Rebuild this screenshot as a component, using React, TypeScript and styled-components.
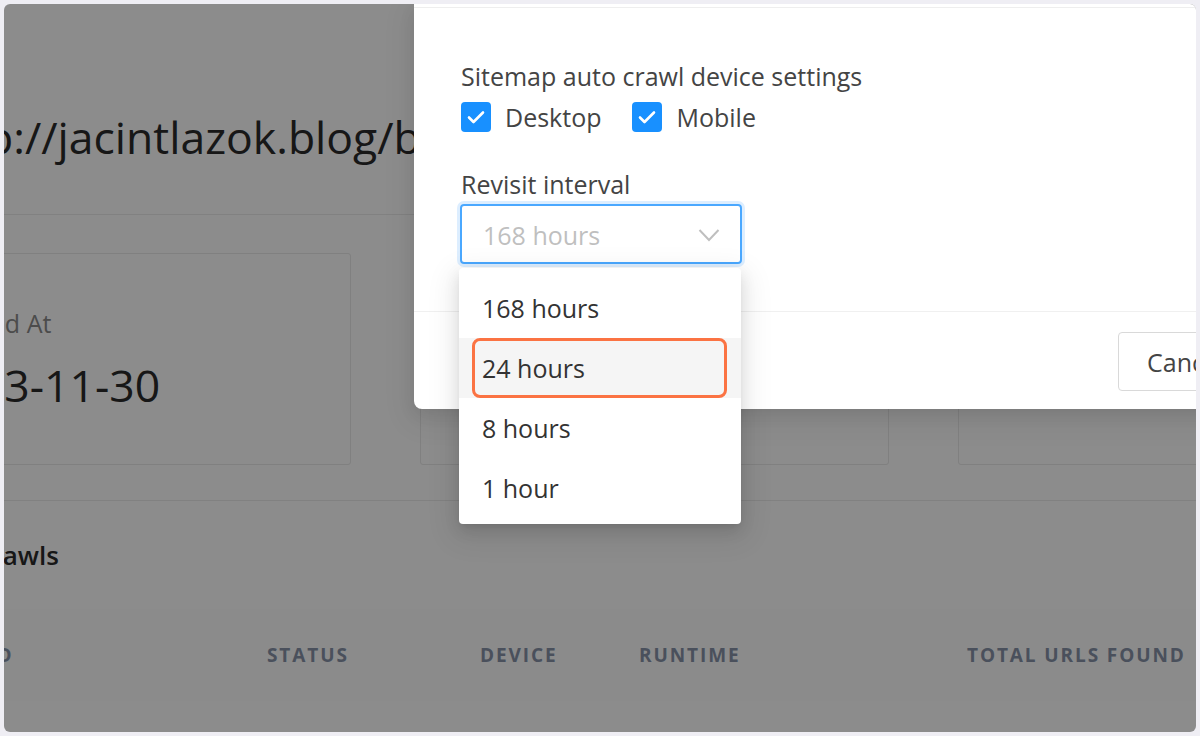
import React from 'react';
import styled, { createGlobalStyle } from 'styled-components';

const GlobalStyle = createGlobalStyle`
  html, body {
    margin: 0;
    padding: 0;
    background: #efeef4;
  }
  body {
    font-family: "Open Sans", "Noto Sans", sans-serif;
  }
  * {
    box-sizing: border-box;
  }
`;

const Frame = styled.div`
  width: 1200px;
  height: 736px;
  padding: 4px;
  background: #efeef4;
  display: flex;
`;

const Screen = styled.div`
  position: relative;
  flex: 1;
  overflow: hidden;
  background: #fff;
  border-radius: 6px;
`;

/* ---------- page behind the modal ---------- */

const Page = styled.div`
  margin-left: -122px;
  width: 1600px;
  display: flex;
  flex-direction: column;
  color: #333;
`;

const TitleBar = styled.div`
  height: 211px;
  padding: 103px 0 0 45px;
  border-bottom: 1px solid #ececec;
`;

const Url = styled.h1`
  margin: 0;
  font-size: 44.5px;
  font-weight: 400;
  line-height: 60px;
  color: #2b2b2b;
`;

const Stats = styled.div`
  display: grid;
  grid-template-columns: repeat(3, 469px);
  column-gap: 69px;
  padding: 38px 0 35px;
  border-bottom: 1px solid #ececec;
`;

const Card = styled.div`
  height: 212px;
  border: 1px solid #e9e9e9;
  border-radius: 3px;
  padding: 52px 0 0 45px;
`;

const CardLabel = styled.div`
  font-size: 25px;
  line-height: 34px;
  color: #8a8a8a;
`;

const CardValue = styled.div`
  margin-top: 15px;
  font-size: 44.5px;
  line-height: 60px;
  color: #2b2b2b;
`;

const Section = styled.div`
  padding: 36px 0 0;
`;

const SectionTitle = styled.h2`
  margin: 0;
  font-size: 26px;
  font-weight: 600;
  line-height: 36px;
  color: #2b2b2b;
`;

const TableHead = styled.div`
  margin-top: 36px;
  height: 92px;
  display: grid;
  grid-template-columns: 385px 213px 159px 328px 1fr;
  align-items: center;
  background: #fdfdfd;
`;

const HeadCell = styled.div`
  font-size: 19px;
  font-weight: 700;
  letter-spacing: 1.9px;
  text-transform: uppercase;
  color: #8793a8;
  padding-left: 24px;
  &:not(:first-child) {
    padding-left: 0;
  }
`;

const Mask = styled.div`
  position: absolute;
  inset: 0;
  background: rgba(0, 0, 0, 0.45);
`;

/* ---------- modal ---------- */

const Modal = styled.div`
  position: absolute;
  top: 0;
  left: 410px;
  width: 900px;
  height: 405px;
  background: #fff;
  border-radius: 0 0 8px 8px;
  display: flex;
  flex-direction: column;
  box-shadow: 0 6px 16px rgba(0, 0, 0, 0.08), 0 9px 28px 8px rgba(0, 0, 0, 0.05);
`;

const ModalTop = styled.div`
  height: 4px;
  border-bottom: 1px solid #eeeeee;
`;

const ModalBody = styled.div`
  height: 303px;
  padding: 50px 0 0 47px;
  display: flex;
  flex-direction: column;
  color: #3d3d3d;
`;

const FieldLabel = styled.div<{ $gap?: number }>`
  font-size: 25px;
  line-height: 36px;
  margin-top: ${p => p.$gap ?? 0}px;
  color: #444;
`;

const CheckRow = styled.div`
  display: flex;
  align-items: center;
  height: 36px;
  margin-top: 5px;
`;

const CheckItem = styled.label`
  display: flex;
  align-items: center;
  gap: 14px;
  margin-right: 31px;
  font-size: 25px;
  color: #444;
`;

const CheckBox = styled.span`
  width: 30px;
  height: 30px;
  border-radius: 4px;
  background: #1890ff;
  display: flex;
  align-items: center;
  justify-content: center;
`;

const SelectBox = styled.div`
  margin-top: 2px;
  width: 282px;
  height: 60px;
  margin-left: -1px;
  border: 2px solid #4aa8ff;
  border-radius: 4px;
  box-shadow: 0 0 0 3px rgba(24, 144, 255, 0.15);
  display: flex;
  align-items: center;
  justify-content: space-between;
  padding: 2px 20px 0 21px;
`;

const Placeholder = styled.span`
  font-size: 25px;
  color: #bfbfbf;
`;

const ModalFooter = styled.div`
  flex: 1;
  border-top: 1px solid #f0f0f0;
  display: flex;
  align-items: flex-start;
  padding: 20px 0 0 704px;
  gap: 16px;
`;

const Button = styled.button<{ $primary?: boolean }>`
  height: 59px;
  padding: 0 28px;
  font-family: inherit;
  font-size: 25px;
  border-radius: 4px;
  border: 1px solid ${p => (p.$primary ? '#1890ff' : '#d9d9d9')};
  background: ${p => (p.$primary ? '#1890ff' : '#fff')};
  color: ${p => (p.$primary ? '#fff' : '#444')};
`;

/* ---------- dropdown ---------- */

const Dropdown = styled.div`
  position: absolute;
  top: 264px;
  left: 455px;
  width: 282px;
  padding: 10px 0 6px;
  background: #fff;
  border-radius: 4px;
  box-shadow: 0 6px 16px rgba(0, 0, 0, 0.1), 0 3px 6px -4px rgba(0, 0, 0, 0.14),
    0 9px 28px 8px rgba(0, 0, 0, 0.07);
`;

const Option = styled.div<{ $active?: boolean }>`
  position: relative;
  height: 60px;
  display: flex;
  align-items: center;
  padding-left: 23px;
  font-size: 25px;
  color: #333;
  background: ${p => (p.$active ? '#f5f5f5' : 'transparent')};
`;

const Highlight = styled.span`
  position: absolute;
  top: 0;
  bottom: 0;
  left: 13px;
  right: 14px;
  border: 3px solid #fb7343;
  border-radius: 8px;
`;

const Check = () => (
  <svg width="18" height="14" viewBox="0 0 18 14">
    <path d="M2 7.5l4.5 4.5L16 2.5" fill="none" stroke="#fff" strokeWidth="2.6" strokeLinecap="round" strokeLinejoin="round" />
  </svg>
);

const Chevron = () => (
  <svg width="22" height="14" viewBox="0 0 22 14">
    <path d="M1.5 2l9.5 10 9.5-10" fill="none" stroke="#bfbfbf" strokeWidth="2" />
  </svg>
);

const options = ['168 hours', '24 hours', '8 hours', '1 hour'];
const headers = ['Crawl ID', 'Status', 'Device', 'Runtime', 'Total URLs Found'];

const App: React.FC = () => {
  return (
    <>
      <GlobalStyle />
      <Frame>
        <Screen>
          <Page>
            <TitleBar>
              <Url>http://jacintlazok.blog/blog</Url>
            </TitleBar>
            <Stats>
              <Card>
                <CardLabel>Created At</CardLabel>
                <CardValue>2023-11-30</CardValue>
              </Card>
              <Card>
                <CardLabel>Last Crawl</CardLabel>
                <CardValue>2023-11-30</CardValue>
              </Card>
              <Card>
                <CardLabel>Total URLs</CardLabel>
                <CardValue>0</CardValue>
              </Card>
            </Stats>
            <Section>
              <SectionTitle>Recent Crawls</SectionTitle>
              <TableHead>
                {headers.map(h => (
                  <HeadCell key={h}>{h}</HeadCell>
                ))}
              </TableHead>
            </Section>
          </Page>
          <Mask />
          <Modal>
            <ModalTop />
            <ModalBody>
              <FieldLabel>Sitemap auto crawl device settings</FieldLabel>
              <CheckRow>
                <CheckItem>
                  <CheckBox><Check /></CheckBox>
                  Desktop
                </CheckItem>
                <CheckItem>
                  <CheckBox><Check /></CheckBox>
                  Mobile
                </CheckItem>
              </CheckRow>
              <FieldLabel $gap={31}>Revisit interval</FieldLabel>
              <SelectBox>
                <Placeholder>168 hours</Placeholder>
                <Chevron />
              </SelectBox>
            </ModalBody>
            <ModalFooter>
              <Button>Cancel</Button>
              <Button $primary>OK</Button>
            </ModalFooter>
          </Modal>
          <Dropdown>
            {options.map((o, i) => (
              <Option key={o} $active={i === 1}>
                {o}
                {i === 1 && <Highlight />}
              </Option>
            ))}
          </Dropdown>
        </Screen>
      </Frame>
    </>
  );
};

export default App;
